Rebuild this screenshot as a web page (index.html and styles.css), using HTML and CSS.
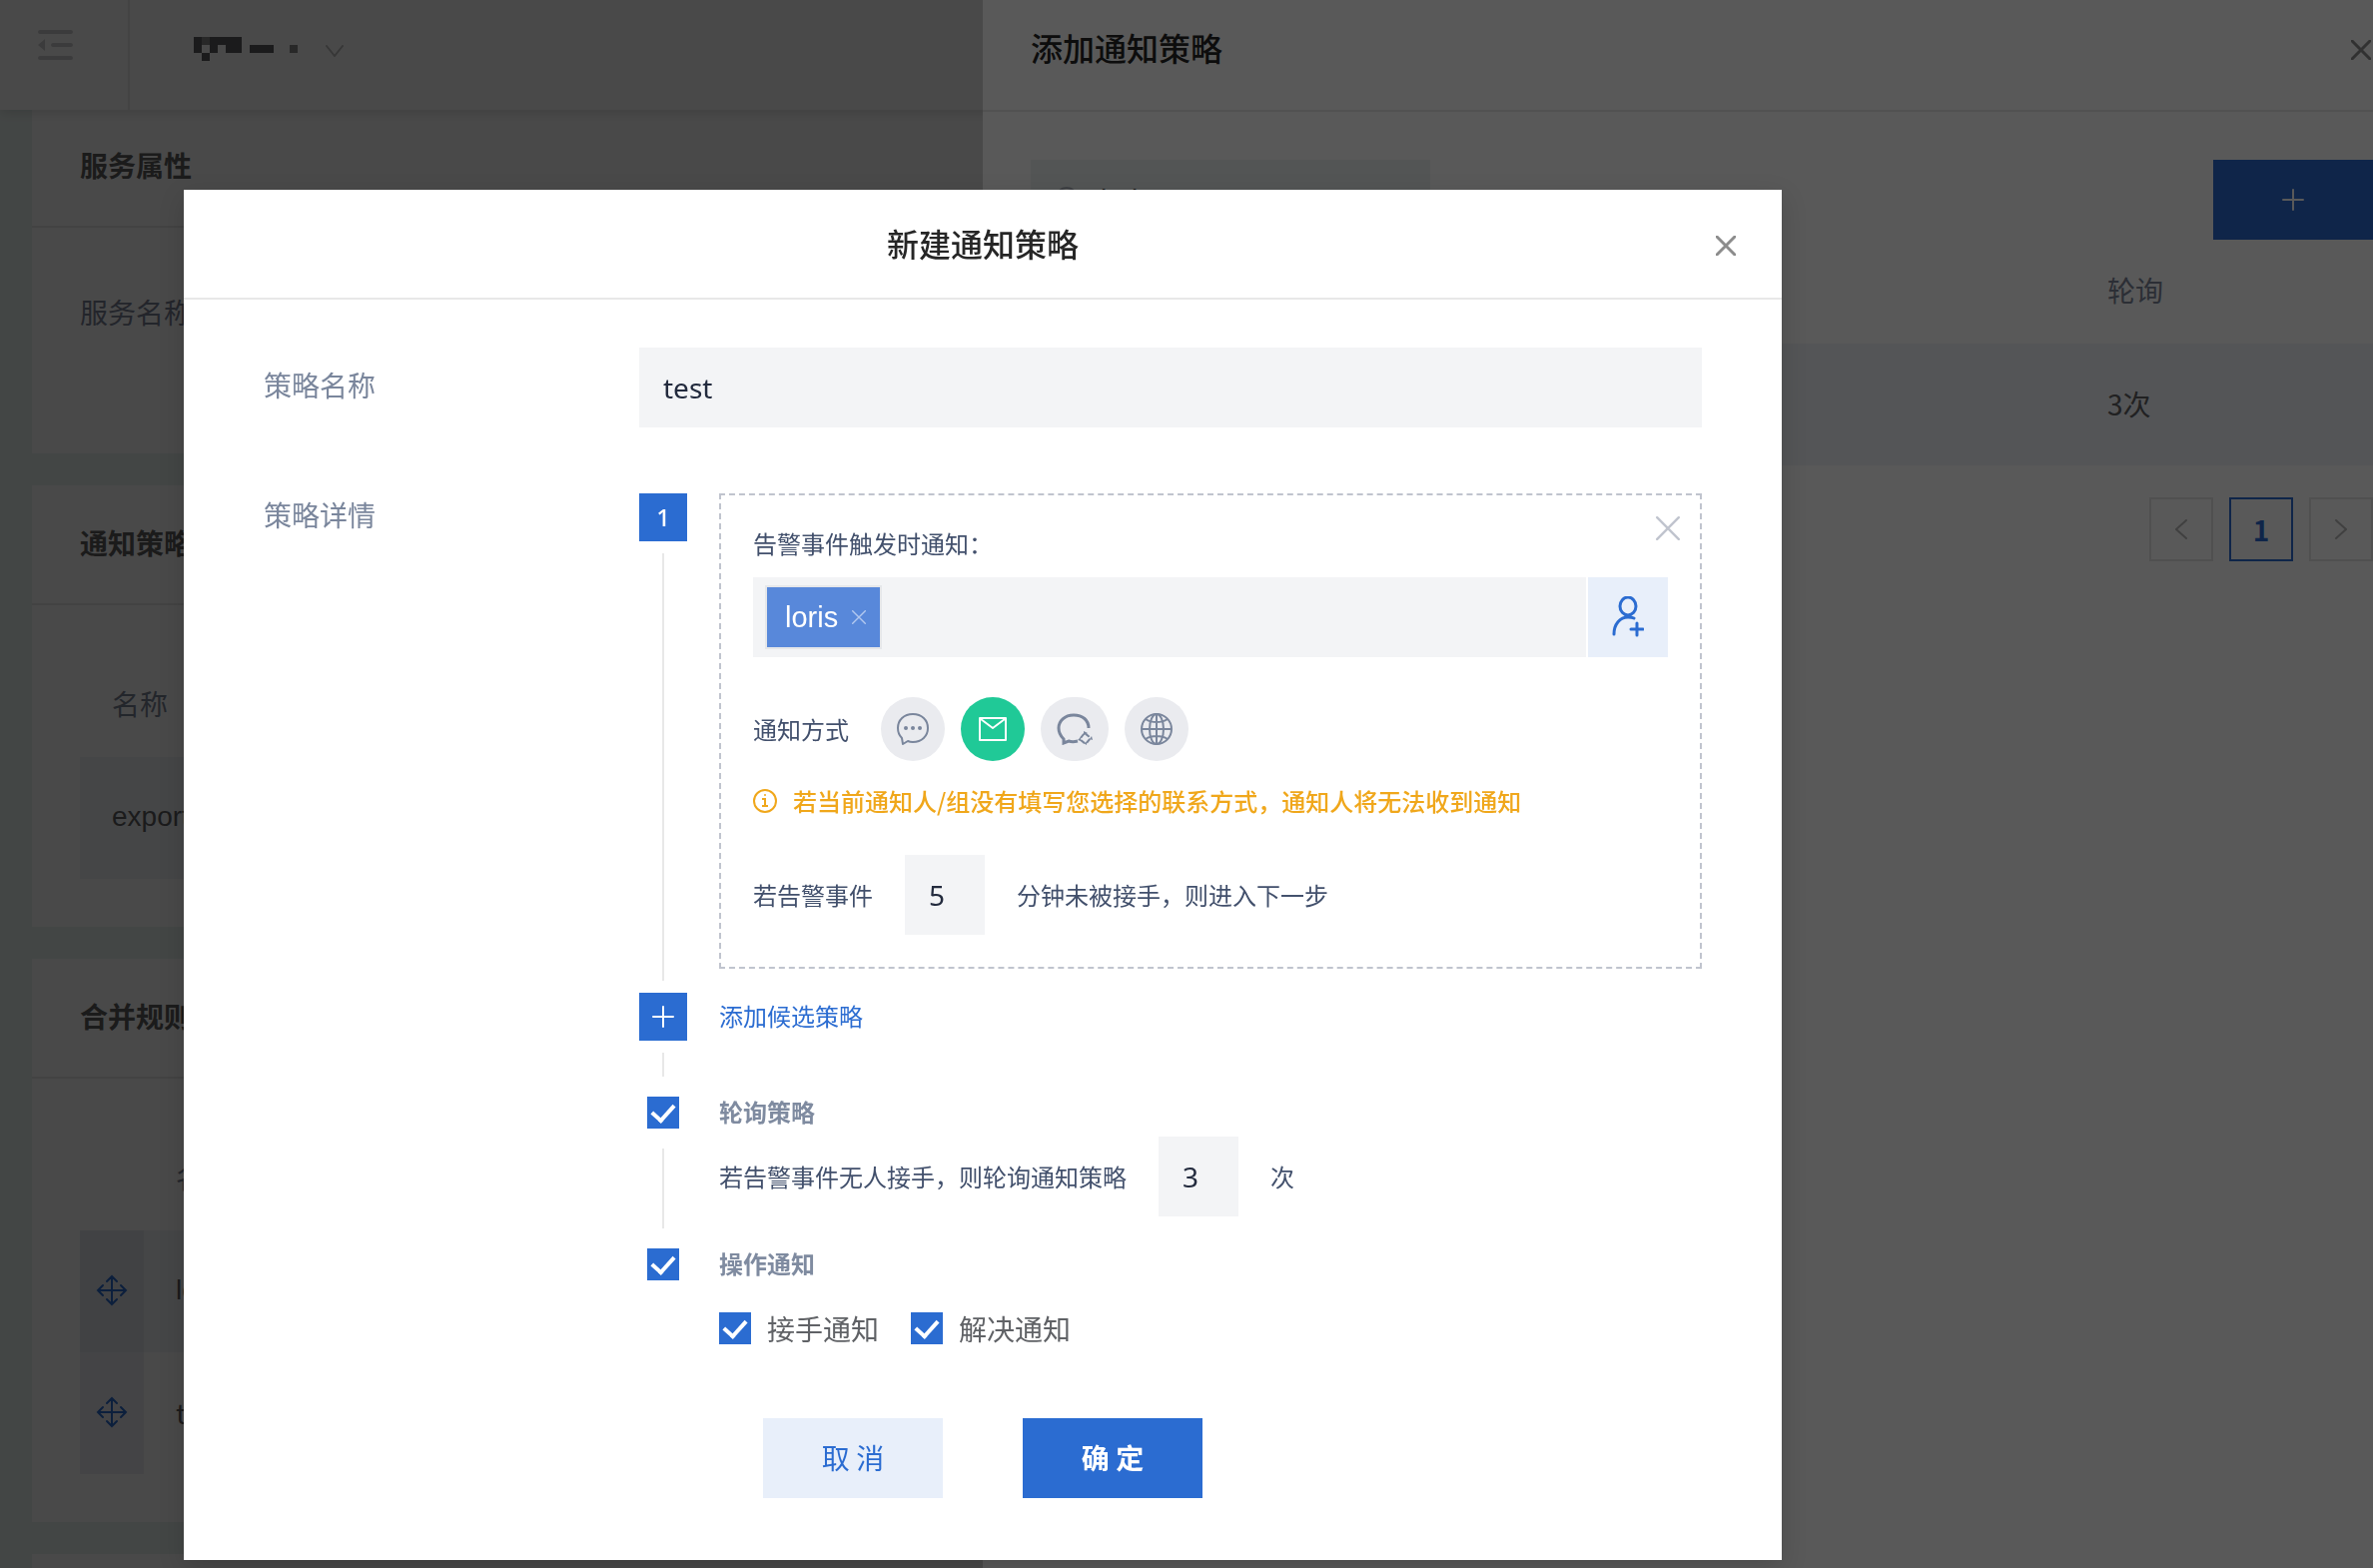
FILE: index.html
```html
<!DOCTYPE html>
<html lang="zh-CN">
<head>
    <meta charset="UTF-8">
    <meta name="viewport" content="width=device-width, initial-scale=1.0">
    <title>新建通知策略</title>
    <link rel="stylesheet" href="styles.css">
</head>
<body>
    <svg class="sprite" aria-hidden="true">
        <symbol id="close" viewBox="0 0 20 20">
            <path d="M1 1L19 19M19 1L1 19" fill="none" stroke="currentColor" stroke-linecap="round" />
        </symbol>
        <symbol id="plus" viewBox="0 0 22 22">
            <path d="M11 1V21M1 11H21" fill="none" stroke="currentColor" stroke-width="2" stroke-linecap="round" />
        </symbol>
        <symbol id="move" viewBox="0 0 32 32">
            <path d="M16 2V30M2 16H30M11 7L16 2L21 7M11 25L16 30L21 25M7 11L2 16L7 21M25 11L30 16L25 21" fill="none" stroke="currentColor" stroke-width="2" stroke-linecap="round" />
        </symbol>
    </svg>

    <!-- service page -->
    <div class="page">
        <header class="topbar">
            <button class="fold" aria-label="menu">
                <svg width="36" height="32" viewBox="0 0 36 32">
                    <path d="M2 3H33M15 16H33M2 29H33" stroke="currentColor" stroke-width="4" stroke-linecap="round" />
                    <path d="M0 16L7 10V22Z" fill="currentColor" />
                </svg>
            </button>
            <button class="project" aria-label="project">
                <svg width="104" height="24" viewBox="0 0 104 24">
                    <path d="M0 0H8V16H0ZM16 0H48V16H32V8H24V16H16ZM8 16H16V24H8ZM56 8H80V16H56Z" fill="#5e5f62" />
                    <path d="M8 0H16V8H8ZM96 8H104V16H96Z" fill="#8b8b8c" />
                </svg>
                <svg class="caret" width="18" height="12" viewBox="0 0 18 12">
                    <path d="M1 1L9 11L17 1" fill="none" stroke="currentColor" stroke-width="2" stroke-linecap="round" />
                </svg>
            </button>
        </header>

        <main class="content">
            <section class="card">
                <h2 class="card-head">服务属性</h2>
                <p class="attr">服务名称</p>
            </section>

            <section class="card">
                <h2 class="card-head">通知策略</h2>
                <div class="card-body">
                    <table class="table">
                        <thead>
                            <tr><th>名称</th></tr>
                        </thead>
                        <tbody>
                            <tr class="odd"><td class="latin">export</td></tr>
                        </tbody>
                    </table>
                </div>
            </section>

            <section class="card">
                <h2 class="card-head">合并规则</h2>
                <div class="card-body">
                    <table class="table">
                        <thead>
                            <tr><th class="drag"></th><th>名称</th></tr>
                        </thead>
                        <tbody>
                            <tr class="odd">
                                <td class="drag"><svg width="32" height="32"><use href="#move" /></svg></td>
                                <td class="latin">loris</td>
                            </tr>
                            <tr>
                                <td class="drag"><svg width="32" height="32"><use href="#move" /></svg></td>
                                <td>test</td>
                            </tr>
                        </tbody>
                    </table>
                </div>
            </section>

            <section class="card">
                <h2 class="card-head"></h2>
            </section>
        </main>
    </div>

    <!-- drawer -->
    <div class="mask mask-light"></div>
    <aside class="drawer">
        <div class="drawer-head">
            <h2>添加通知策略</h2>
            <button class="close" aria-label="close"><svg width="20" height="20" stroke-width="3"><use href="#close" /></svg></button>
        </div>
        <div class="drawer-body">
            <div class="toolbar">
                <label class="search">
                    <svg width="28" height="28" viewBox="0 0 28 28">
                        <circle cx="12" cy="12" r="10" fill="none" stroke="currentColor" stroke-width="2" />
                        <path d="M19 19L26 26" stroke="currentColor" stroke-width="2" stroke-linecap="round" />
                    </svg>
                    <input type="text" value="loris" aria-label="search">
                </label>
                <button class="add" aria-label="add"><svg width="22" height="22"><use href="#plus" /></svg></button>
            </div>
            <table class="table">
                <thead>
                    <tr><th></th><th class="poll">轮询</th></tr>
                </thead>
                <tbody>
                    <tr class="odd"><td></td><td class="poll">3次</td></tr>
                </tbody>
            </table>
            <nav class="pages">
                <button class="page-btn" aria-label="prev"><svg width="12" height="20" viewBox="0 0 12 20"><path d="M11 1L1 10L11 19" fill="none" stroke="currentColor" stroke-width="2" stroke-linecap="round" /></svg></button>
                <button class="page-btn current">1</button>
                <button class="page-btn" aria-label="next"><svg width="12" height="20" viewBox="0 0 12 20"><path d="M1 1L11 10L1 19" fill="none" stroke="currentColor" stroke-width="2" stroke-linecap="round" /></svg></button>
            </nav>
        </div>
    </aside>

    <!-- modal -->
    <div class="mask mask-dark">
        <form class="modal" role="dialog">
            <div class="modal-head">
                <h1>新建通知策略</h1>
                <button type="button" class="close" aria-label="close"><svg width="20" height="20" stroke-width="3"><use href="#close" /></svg></button>
            </div>

            <div class="modal-body">
                <label class="form-label" for="name">策略名称</label>
                <input class="text" type="text" id="name" value="test">

                <span class="form-label detail">策略详情</span>
                <div class="steps">
                    <div class="step">
                        <div class="rail">
                            <span class="badge">1</span>
                            <span class="line"></span>
                        </div>
                        <div class="rule">
                            <button type="button" class="rule-close" aria-label="remove"><svg width="24" height="24" stroke-width="2"><use href="#close" /></svg></button>
                            <label class="rule-title" for="people">告警事件触发时通知：</label>
                            <div class="people">
                                <div class="select">
                                    <span class="tag">loris
                                        <button type="button" aria-label="remove"><svg width="14" height="14" stroke-width="2"><use href="#close" /></svg></button>
                                    </span>
                                    <input type="text" id="people">
                                </div>
                                <button type="button" class="add-user" aria-label="add user">
                                    <svg width="32" height="42" viewBox="0 0 32 42" fill="none" stroke="currentColor" stroke-width="3" stroke-linecap="round">
                                        <ellipse cx="16" cy="10" rx="8" ry="9" />
                                        <path d="M2 38C2 28 8 21 16 21C18 21 20 21 22 22M25 27V39M19 33H31" />
                                    </svg>
                                </button>
                            </div>

                            <div class="ways">
                                <span>通知方式</span>
                                <div class="way-list">
                                    <button type="button" class="way" aria-label="sms">
                                        <svg width="34" height="34" viewBox="0 0 34 34">
                                            <path d="M6 26C3 23 2 20 2 16C2 8 8 2 17 2C26 2 32 8 32 16C32 24 26 30 17 30C15 30 14 30 12 29L7 32Z" fill="none" stroke="currentColor" stroke-width="2" stroke-linejoin="round" />
                                            <circle cx="10" cy="16" r="2" fill="currentColor" />
                                            <circle cx="17" cy="16" r="2" fill="currentColor" />
                                            <circle cx="24" cy="16" r="2" fill="currentColor" />
                                        </svg>
                                    </button>
                                    <button type="button" class="way on" aria-label="mail">
                                        <svg width="28" height="24" viewBox="0 0 28 24">
                                            <path d="M1 1H27V23H1ZM2 2L14 11L26 2" fill="none" stroke="currentColor" stroke-width="2" stroke-linejoin="round" />
                                        </svg>
                                    </button>
                                    <button type="button" class="way wide" aria-label="wechat">
                                        <svg width="36" height="32" viewBox="0 0 36 32">
                                            <path d="M32 15C32 7 26 2 17 2C8 2 2 8 2 15C2 20 4 23 7 26V30L12 28C15 29 17 29 21 28" fill="none" stroke="currentColor" stroke-width="3" />
                                            <path d="M28 20L34 25L29 31L23 26Z" fill="none" stroke="currentColor" stroke-width="2" stroke-dasharray="5 3" stroke-dashoffset="-1" />
                                            <path d="M27 18L31 20L27 22ZM35 23L36 27L33 26ZM30 32L27 30L30 29ZM21 27L24 24L24 28Z" fill="currentColor" />
                                        </svg>
                                    </button>
                                    <button type="button" class="way" aria-label="web">
                                        <svg width="34" height="34" viewBox="0 0 34 34" fill="none" stroke="currentColor" stroke-width="2">
                                            <circle cx="17" cy="17" r="15" />
                                            <ellipse cx="17" cy="17" rx="7" ry="15" />
                                            <path d="M17 2V32M2 17H32M6 7C12 11 22 11 28 7M6 27C12 23 22 23 28 27" />
                                        </svg>
                                    </button>
                                </div>
                            </div>

                            <p class="warn">
                                <svg width="24" height="24" viewBox="0 0 24 24" fill="none" stroke="currentColor" stroke-width="2">
                                    <circle cx="12" cy="12" r="11" />
                                    <path d="M9 10H12V17M9 17H15" />
                                    <circle cx="12" cy="6" r="1" fill="currentColor" stroke="none" />
                                </svg>
                                若当前通知人/组没有填写您选择的联系方式，通知人将无法收到通知
                            </p>

                            <div class="inline">
                                <label for="minutes">若告警事件</label>
                                <input class="text num" type="text" id="minutes" value="5">
                                <span>分钟未被接手，则进入下一步</span>
                            </div>
                        </div>
                    </div>

                    <div class="step">
                        <div class="rail">
                            <button type="button" class="badge" aria-label="add step"><svg width="22" height="22"><use href="#plus" /></svg></button>
                            <span class="line short"></span>
                        </div>
                        <div><a class="add-step" href="#">添加候选策略</a></div>
                    </div>

                    <div class="step">
                        <div class="rail">
                            <span class="tick"><input type="checkbox" id="poll" checked></span>
                            <span class="line"></span>
                        </div>
                        <div class="poll-rule">
                            <label class="step-title" for="poll">轮询策略</label>
                            <div class="inline">
                                <label for="times">若告警事件无人接手，则轮询通知策略</label>
                                <input class="text num" type="text" id="times" value="3">
                                <span>次</span>
                            </div>
                        </div>
                    </div>

                    <div class="step">
                        <div class="rail">
                            <span class="tick"><input type="checkbox" id="action" checked></span>
                        </div>
                        <div>
                            <label class="step-title" for="action">操作通知</label>
                            <div class="checks">
                                <label><input type="checkbox" checked>接手通知</label>
                                <label><input type="checkbox" checked>解决通知</label>
                            </div>
                        </div>
                    </div>
                </div>
            </div>

            <div class="modal-foot">
                <button type="button" class="btn">取 消</button>
                <button type="button" class="btn primary">确 定</button>
            </div>
        </form>
    </div>
</body>
</html>
```
FILE: styles.css
```css
* {
    box-sizing: border-box;
    margin: 0;
    padding: 0;
}

html,
body {
    height: 100%;
    overflow: hidden;
}

body {
    font-family: "Noto Sans CJK SC", sans-serif;
    font-size: 28px;
    line-height: 44px;
    color: #5e5f62;
}

button,
input {
    font: inherit;
    color: inherit;
    border: none;
    outline: none;
    background: none;
}

button {
    display: flex;
    align-items: center;
    justify-content: center;
    cursor: pointer;
}

svg {
    display: block;
}

.sprite {
    position: absolute;
    width: 0;
    height: 0;
}

.latin,
.search input,
.tag {
    font-family: "Liberation Sans", sans-serif;
}

/* service page */
.page {
    height: 100%;
    overflow: hidden;
    background: #ebf4f1;
}

.topbar {
    display: flex;
    position: relative;
    height: 110px;
    margin-bottom: -2px;
    background: white;
    box-shadow: 0 2px 12px rgba(0, 0, 0, 0.15);
}

.fold {
    width: 130px;
    padding: 0 16px 20px 0;
    border-right: 2px solid #e8e8e8;
    color: #cdced0;
}

.project {
    padding: 0 0 12px 64px;
    gap: 28px;
}

.caret {
    margin-top: 4px;
    color: #bfbfbf;
}

.content {
    display: flex;
    flex-direction: column;
    gap: 32px;
    padding-left: 32px;
}

.card {
    background: white;
}

.card-head {
    height: 120px;
    padding-left: 48px;
    border-bottom: 2px solid #e8e8e8;
    font-size: 28px;
    line-height: 114px;
    color: #606060;
}

.attr {
    padding: 62px 48px 120px;
    color: #7a8296;
}

.card-body {
    padding: 48px;
}

.table {
    width: 100%;
    border-collapse: collapse;
    text-align: left;
}

.table th {
    height: 104px;
    padding: 0 0 4px 32px;
    font-weight: normal;
    color: #7c8598;
}

.table td {
    height: 122px;
    padding: 0 0 2px 32px;
}

.odd {
    background: #f1f4f9;
}

.table .drag {
    width: 64px;
    padding-left: 16px;
    color: #2b6cd1;
}

td.drag {
    background: #eeeef4;
}

.odd td.drag {
    background: #e2e6ed;
}

/* drawer */
.mask {
    position: fixed;
    inset: 0;
}

.mask-light {
    background: rgba(0, 0, 0, 0.18);
}

.mask-dark {
    padding: 190px 184px 8px;
    background: rgba(0, 0, 0, 0.65);
    overflow: auto;
}

.drawer {
    position: fixed;
    top: 0;
    right: 0;
    bottom: 0;
    left: 984px;
    background: white;
}

.drawer-head {
    display: flex;
    justify-content: space-between;
    align-items: center;
    height: 112px;
    padding: 0 2px 10px 48px;
    border-bottom: 2px solid #e8e8e8;
}

.drawer-head h2,
.modal-head h1 {
    padding-bottom: 6px;
    font-size: 32px;
    font-weight: 500;
    color: #262626;
}

.close {
    color: #8c8c8c;
}

.drawer-body {
    padding: 48px 0 0 48px;
}

.toolbar {
    display: flex;
    justify-content: space-between;
}

.search {
    display: flex;
    align-items: center;
    gap: 18px;
    width: 400px;
    height: 80px;
    padding-left: 24px;
    background: #edf4f2;
    color: #b0b5c0;
}

.search input {
    width: 300px;
    color: #262626;
}

.add {
    width: 160px;
    height: 80px;
    background: #2b6cd1;
    color: white;
}

.table .poll {
    width: 298px;
}

.pages {
    display: flex;
    justify-content: flex-end;
    gap: 16px;
    margin-top: 32px;
}

.page-btn {
    width: 64px;
    height: 64px;
    border: 2px solid #e4e4e4;
    color: #b8b8b8;
}

.page-btn.current {
    border-color: #2b6cd1;
    font-weight: bold;
    color: #2b6cd1;
}

/* modal */
.modal {
    max-width: 1600px;
    background: white;
    box-shadow: 0 8px 24px rgba(0, 0, 0, 0.15);
    font-size: 24px;
    line-height: 32px;
    color: #42506c;
}

.modal-head {
    display: grid;
    grid-template-columns: 1fr auto 1fr;
    align-items: center;
    height: 110px;
    padding: 4px 46px 0;
    border-bottom: 2px solid #e8e8e8;
}

.modal-head h1 {
    grid-column: 2;
}

.modal-head .close {
    justify-self: end;
}

.modal-body {
    display: grid;
    grid-template-columns: 376px 1fr;
    row-gap: 66px;
    padding: 48px 80px 0;
}

.form-label {
    font-size: 28px;
    line-height: 74px;
    color: #7a869c;
}

.form-label.detail {
    line-height: 42px;
}

.text {
    width: 100%;
    height: 80px;
    padding: 0 24px;
    background: #f3f4f6;
    font-family: "Noto Sans", sans-serif;
    font-size: 28px;
    color: #232b3e;
}

.step {
    display: grid;
    grid-template-columns: 48px 1fr;
    column-gap: 32px;
}

.rail {
    display: flex;
    flex-direction: column;
    align-items: center;
}

.badge {
    display: flex;
    align-items: center;
    justify-content: center;
    width: 48px;
    height: 48px;
    background: #2b6cd1;
    font-family: "Noto Sans", sans-serif;
    font-weight: 500;
    color: white;
}

.line {
    flex: 1;
    width: 2px;
    margin: 12px 0;
    background: #e8e8e8;
}

.line.short {
    flex: none;
    height: 24px;
}

.rule {
    position: relative;
    margin-bottom: 24px;
    padding: 32px;
    border: 2px dashed #c0c4ce;
}

.rule-close {
    position: absolute;
    top: 21px;
    right: 20px;
    color: #c0c4ce;
}

.rule-title {
    display: block;
    margin-bottom: 18px;
}

.people {
    display: flex;
    gap: 2px;
}

.select {
    display: flex;
    flex: 1;
    align-items: center;
    padding-left: 12px;
    background: #f3f4f6;
}

.select input {
    flex: 1;
    height: 64px;
}

.tag {
    display: flex;
    align-items: center;
    gap: 14px;
    height: 64px;
    padding: 0 14px 0 18px;
    border: 2px solid #e5e7ea;
    background: #5888da;
    font-size: 29px;
    color: white;
}

.tag button {
    color: #b2c8ef;
}

.add-user {
    width: 80px;
    height: 80px;
    background: #e8effa;
    color: #2b6cd1;
}

.ways {
    display: flex;
    align-items: center;
    gap: 32px;
    margin-top: 40px;
}

.way-list {
    display: flex;
    gap: 16px;
}

.way {
    width: 64px;
    height: 64px;
    border-radius: 32px;
    background: #eaebef;
    color: #7a869c;
}

.way.wide {
    width: 68px;
}

.way.on {
    background: #20c997;
    color: white;
}

.warn {
    display: flex;
    align-items: center;
    gap: 16px;
    margin: 24px 0 38px;
    font-weight: 500;
    color: #f0a71b;
}

.inline {
    display: flex;
    align-items: center;
    gap: 32px;
}

.text.num {
    width: 80px;
}

.add-step {
    line-height: 46px;
    color: #2b6cd1;
    text-decoration: none;
}

.tick {
    display: flex;
    align-items: center;
    height: 48px;
}

input[type=checkbox] {
    display: flex;
    justify-content: center;
    width: 32px;
    height: 32px;
    appearance: none;
    background: #2b6cd1;
}

input[type=checkbox]::after {
    content: "";
    width: 10px;
    height: 18px;
    margin-top: 3px;
    border: solid white;
    border-width: 0 4px 4px 0;
    transform: rotate(42deg);
}

.step-title {
    display: block;
    margin-bottom: 2px;
    font-weight: bold;
    line-height: 46px;
    color: #7f8ba0;
}

.poll-rule {
    padding-bottom: 24px;
}

.checks {
    display: flex;
    align-items: center;
    gap: 32px;
    height: 80px;
    font-size: 28px;
    color: #606266;
}

.checks label {
    display: flex;
    align-items: center;
    gap: 16px;
}

.modal-foot {
    display: flex;
    justify-content: center;
    gap: 80px;
    padding: 50px 0 62px;
}

.btn {
    width: 180px;
    height: 80px;
    padding-bottom: 2px;
    background: #e8effa;
    font-size: 28px;
    color: #2b6cd1;
}

.btn.primary {
    background: #2b6cd1;
    font-weight: bold;
    color: white;
}
```
